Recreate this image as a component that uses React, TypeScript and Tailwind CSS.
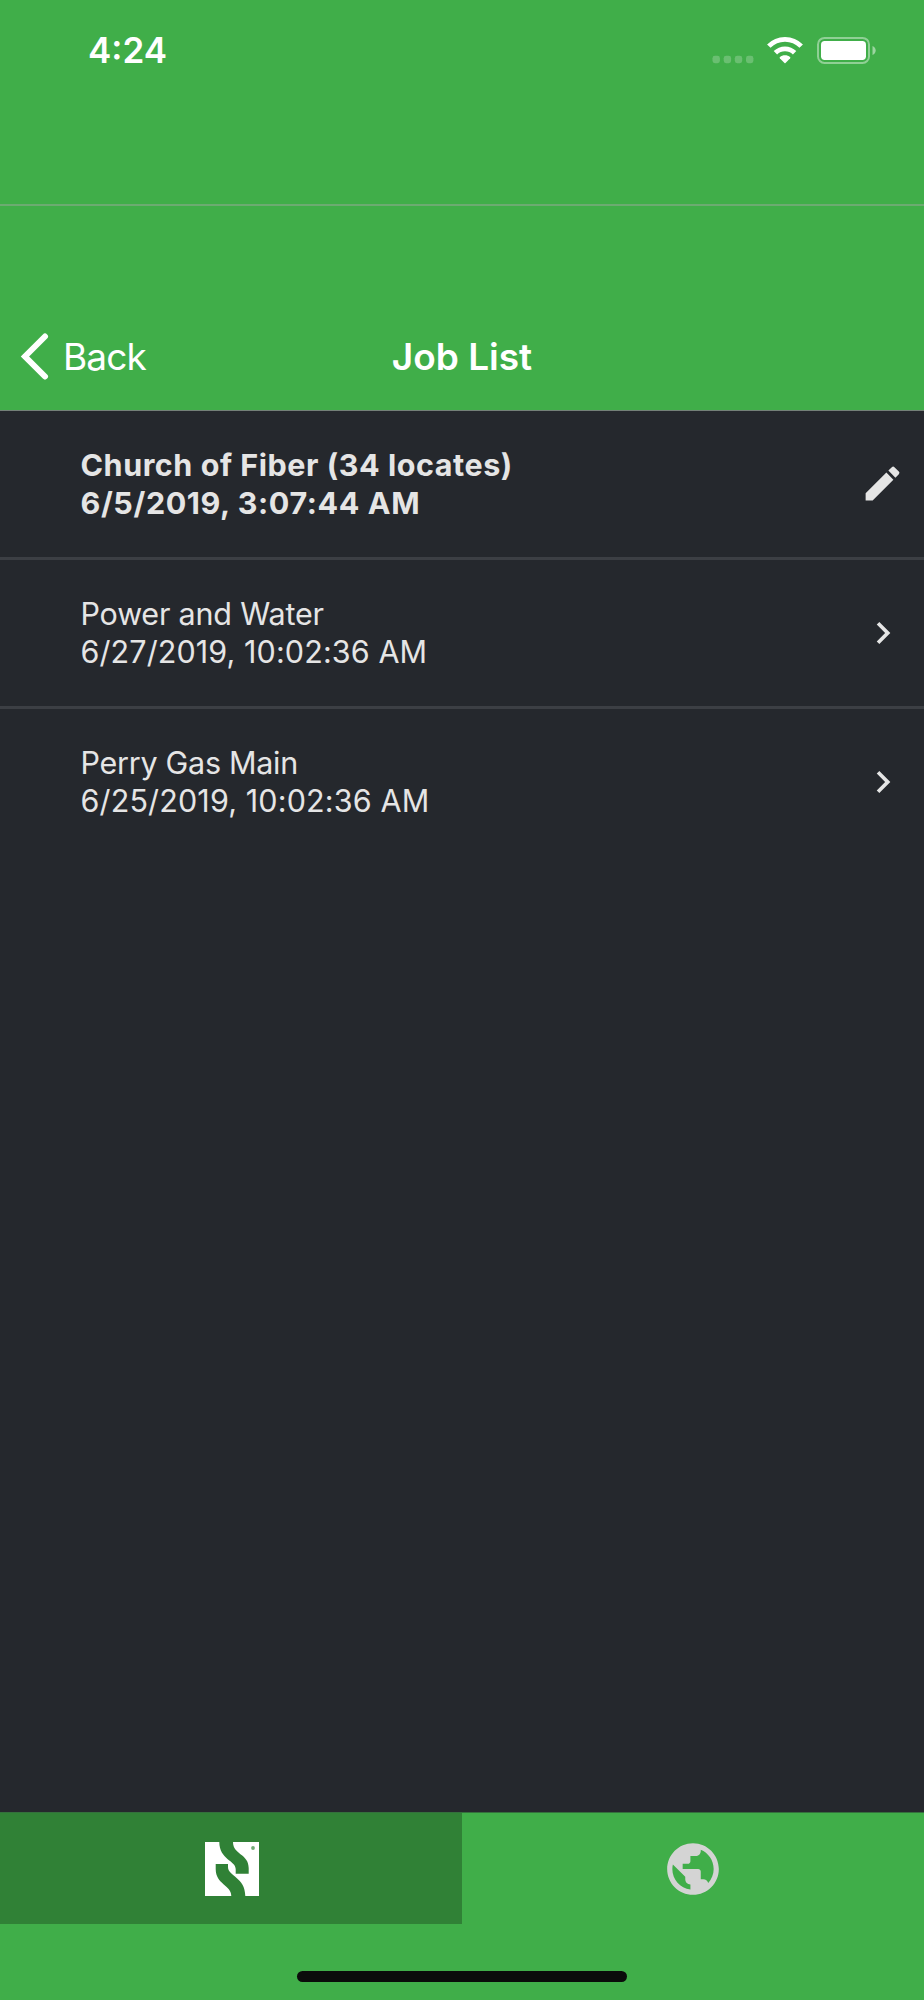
import React from 'react';
import { MdChevronRight, MdEdit, MdPublic } from 'react-icons/md';

type Job = {
  name: string;
  date: string;
  nameTracking: string;
  dateTracking: string;
  current?: boolean;
};

const jobs: Job[] = [
  { name: 'Church of Fiber (34 locates)', date: '6/5/2019, 3:07:44 AM', nameTracking: 'tracking-[0.54px]', dateTracking: 'tracking-[0.6px]', current: true },
  { name: 'Power and Water', date: '6/27/2019, 10:02:36 AM', nameTracking: 'tracking-[-0.2px]', dateTracking: 'tracking-[0.1px]' },
  { name: 'Perry Gas Main', date: '6/25/2019, 10:02:36 AM', nameTracking: 'tracking-[-0.28px]', dateTracking: 'tracking-[0.14px]' },
];

const StatusBar: React.FC = () => (
  <div className="flex h-[204px] items-start justify-between pl-[88px] pr-[48px]">
    <span className="pt-[30px] text-[35px] leading-[41px] font-semibold">4:24</span>
    <svg className="mt-[35px]" width="164" height="30" viewBox="0 0 164 30" fill="none">
      <g fill="#fff" fillOpacity="0.22">
        <rect x="0.5" y="20.8" width="7.4" height="7.4" rx="2.4" />
        <rect x="11.7" y="20.8" width="7.4" height="7.4" rx="2.4" />
        <rect x="22.8" y="20.8" width="7.4" height="7.4" rx="2.4" />
        <rect x="34" y="20.8" width="7.4" height="7.4" rx="2.4" />
      </g>
      <g stroke="#fff" strokeWidth="4.8">
        <path d="M56.8 11.2A22.5 22.5 0 0 1 89.2 11.2" />
        <path d="M63.4 17.8A13.6 13.6 0 0 1 82.6 17.8" />
      </g>
      <path d="M72.5 28.1 67.8 23.3a.8.8 0 0 1 0-1.1c2.8-2.5 7.6-2.5 10.4 0a.8.8 0 0 1 0 1.1L73.5 28.1a.7.7 0 0 1-1 0z" fill="#fff" />
      <rect x="106" y="2.9" width="51" height="25" rx="6.5" stroke="#fff" strokeOpacity="0.42" strokeWidth="2" />
      <rect x="109" y="6" width="45" height="19" rx="3.7" fill="#fff" />
      <path d="M160.5 11v9c1.9-.8 3.2-2.5 3.2-4.5s-1.3-3.7-3.2-4.5z" fill="#fff" fillOpacity="0.48" />
    </svg>
  </div>
);

const NavBar: React.FC = () => (
  <div className="grid h-[206px] grid-cols-[1fr_auto_1fr] items-end border-t-2 border-[#6cab71] pb-[29px]">
    <div className="flex items-center pl-[20px]">
      <svg width="30" height="48" viewBox="0 0 30 48" fill="none" stroke="#fff" strokeWidth="6" strokeLinecap="round">
        <path d="M25 3.5 5 23.5 25 43.5" strokeLinejoin="miter" />
      </svg>
      <span className="pl-[13px] text-[37px] leading-[48px] tracking-[-0.9px]">Back</span>
    </div>
    <h1 className="text-[37px] leading-[48px] font-semibold">Job List</h1>
  </div>
);

const JobRow: React.FC<{ job: Job }> = ({ job }) => (
  <li className="flex h-[149px] items-center justify-between border-b-[3px] border-[#3c3f44] pl-[80.5px] pr-[19px] last:border-transparent">
    <div className={`text-[30.5px] leading-[38px] whitespace-nowrap ${job.current ? 'font-bold' : 'font-normal'}`}>
      <div className={job.nameTracking}>{job.name}</div>
      <div className={job.dateTracking}>{job.date}</div>
    </div>
    {job.current ? <MdEdit size={45} className="mb-[2px]" /> : <MdChevronRight size={44} className="mb-px" />}
  </li>
);

const TabBar: React.FC = () => (
  <div className="h-[188px] border-t border-[#34703c] bg-[#40ae49]">
    <div className="grid h-[111px] grid-cols-2">
      <div className="flex items-center justify-center bg-[#308136] pl-[2px]">
        <svg width="54" height="54" viewBox="0 0 54 54">
          <path d="M0 0h54v54H0z" fill="#fff" />
          <path
            d="M14.3 0H28c0 13 15.7 11.5 15.7 26v5.7h-13V27C30.7 18.5 14.3 17.5 14.3 0zM10.7 22H23v3c0 9.5 17.3 10 17.3 29H26.3C26.3 43 10.7 42.5 10.7 27z"
            fill="#308136"
          />
          <circle cx="48" cy="6" r="1.9" fill="#70a974" />
        </svg>
      </div>
      <div className="flex items-center justify-center">
        <MdPublic size={62} className="text-[#d4d4d4]" />
      </div>
    </div>
    <div className="mx-auto mt-[47px] h-[11px] w-[330px] rounded-full bg-[#0b0c0b]" />
  </div>
);

const App: React.FC = () => {
  return (
    <div className="flex h-[2000px] w-[924px] flex-col overflow-hidden bg-[#25282d] font-['Inter',sans-serif]">
      <header className="border-b border-[#748078] bg-[#40ae49] text-white">
        <StatusBar />
        <NavBar />
      </header>
      <ul className="flex-1 text-[#e5e5e5]">
        {jobs.map((job) => (
          <JobRow key={job.name} job={job} />
        ))}
      </ul>
      <TabBar />
    </div>
  );
};

export default App;
